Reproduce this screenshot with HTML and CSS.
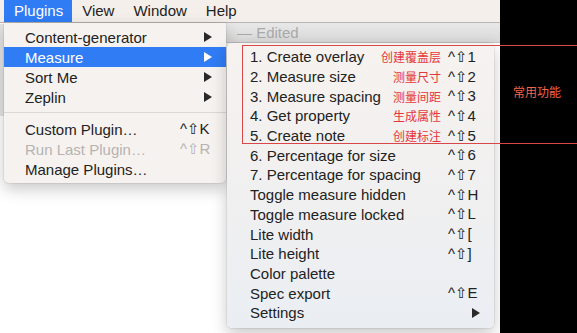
FILE: index.html
```html
<!DOCTYPE html>
<html lang="en">
<head>
  <meta charset="UTF-8" />
  <title>Plugins menu</title>
  <link rel="stylesheet" href="styles.css">
</head>
<body>
  <div class="screen">
    <div class="desk">
      <div class="menubar">
        <span class="top-item active">Plugins</span>
        <span class="top-item">View</span>
        <span class="top-item">Window</span>
        <span class="top-item">Help</span>
      </div>
      <div class="titlebar">— Edited</div>
      <div class="side-strip"></div>

      <div class="menu">
        <div class="row"><span class="name">Content-generator</span><span class="arrow"></span></div>
        <div class="row selected"><span class="name">Measure</span><span class="arrow"></span></div>
        <div class="row"><span class="name">Sort Me</span><span class="arrow"></span></div>
        <div class="row"><span class="name">Zeplin</span><span class="arrow"></span></div>
        <div class="sep"></div>
        <div class="row"><span class="name">Custom Plugin…</span><span class="key">^⇧K</span></div>
        <div class="row disabled"><span class="name">Run Last Plugin…</span><span class="key">^⇧R</span></div>
        <div class="row"><span class="name">Manage Plugins…</span></div>
      </div>

      <div class="submenu">
        <div class="row"><span class="name">1. Create overlay</span><span class="cn">创建覆盖层</span><span class="key">^⇧1</span></div>
        <div class="row"><span class="name">2. Measure size</span><span class="cn">测量尺寸</span><span class="key">^⇧2</span></div>
        <div class="row"><span class="name">3. Measure spacing</span><span class="cn">测量间距</span><span class="key">^⇧3</span></div>
        <div class="row"><span class="name">4. Get property</span><span class="cn">生成属性</span><span class="key">^⇧4</span></div>
        <div class="row"><span class="name">5. Create note</span><span class="cn">创建标注</span><span class="key">^⇧5</span></div>
        <div class="row"><span class="name">6. Percentage for size</span><span class="key">^⇧6</span></div>
        <div class="row"><span class="name">7. Percentage for spacing</span><span class="key">^⇧7</span></div>
        <div class="row"><span class="name">Toggle measure hidden</span><span class="key">^⇧H</span></div>
        <div class="row"><span class="name">Toggle measure locked</span><span class="key">^⇧L</span></div>
        <div class="row"><span class="name">Lite width</span><span class="key">^⇧[</span></div>
        <div class="row"><span class="name">Lite height</span><span class="key">^⇧]</span></div>
        <div class="row"><span class="name">Color palette</span></div>
        <div class="row"><span class="name">Spec export</span><span class="key">^⇧E</span></div>
        <div class="row"><span class="name">Settings</span><span class="arrow"></span></div>
      </div>
    </div>
    <div class="side"></div>

    <div class="note"><span class="note-label">常用功能</span></div>
  </div>
</body>
</html>
```

FILE: styles.css
```css
* {
  margin: 0;
  padding: 0;
  box-sizing: border-box;
}

body {
  font-family: "Liberation Sans", "Noto Sans CJK SC", sans-serif;
  font-size: 15px;
  color: #222;
  background: #fff;
}

.screen {
  position: relative;
  display: flex;
  width: 577px;
  height: 333px;
  overflow: hidden;
}

.desk {
  position: relative;
  width: 500px;
  height: 333px;
  background: #fff;
}

.side {
  flex: 1;
  background: #000;
}

/* top menu bar */
.menubar {
  display: flex;
  height: 23px;
  padding-left: 4px;
  background: #f4efea;
  border-bottom: 1px solid #b9b6b3;
}

.top-item {
  line-height: 22px;
  padding: 0 9px 0 10px;
}

.top-item.active {
  background: #2f7cf5;
  color: #fff;
}

/* window behind the menus */
.titlebar {
  margin-left: 226px;
  height: 20px;
  padding-left: 11px;
  line-height: 19px;
  color: #a9a9a9;
  background: linear-gradient(#e9e8e8, #d9d9d9);
  border-bottom: 1px solid #c4c4c4;
}

.side-strip {
  position: absolute;
  left: 0;
  top: 24px;
  width: 4px;
  height: 92px;
  background: #e4e4e4;
}

/* menus */
.menu,
.submenu {
  position: absolute;
  border-radius: 0 0 5px 5px;
  box-shadow: 0 6px 16px rgba(0, 0, 0, 0.22), 0 0 0 1px rgba(0, 0, 0, 0.06);
}

.menu {
  left: 4px;
  top: 23px;
  width: 222px;
  padding: 4px 0;
  background: #f6f2ef;
}

.submenu {
  left: 227px;
  top: 43px;
  width: 267px;
  padding: 4px 0 5px;
  border-radius: 5px;
  background: linear-gradient(#f6f2ef, #f1f0f0 50%, #eaeef3);
}

.row {
  display: flex;
  align-items: center;
  height: 20px;
  padding: 0 12px 0 21px;
}

.submenu .row {
  height: 19.7px;
  padding: 0 12px 0 23px;
}

.row .name {
  flex: 1;
  white-space: nowrap;
}

.row .key {
  width: 34px;
  white-space: nowrap;
  font-family: "Liberation Sans", "DejaVu Sans", sans-serif;
}

.row .cn {
  margin-right: 7px;
  font-family: "Noto Sans CJK SC", sans-serif;
  font-size: 12px;
  color: #e5373b;
}

.row .arrow {
  width: 0;
  height: 0;
  margin-right: 2px;
  border-top: 5px solid transparent;
  border-bottom: 5px solid transparent;
  border-left: 8px solid #2a2a2a;
}

.row.selected {
  background: #2f7cf5;
  color: #fff;
}

.row.selected .arrow {
  border-left-color: #fff;
}

.row.disabled {
  color: #b6b3b1;
}

.sep {
  height: 1px;
  margin: 5px 0 6px;
  background: #dcd8d5;
}

/* annotation */
.note {
  position: absolute;
  left: 242px;
  top: 45px;
  width: 336px;
  height: 99px;
  display: flex;
  align-items: center;
  justify-content: flex-end;
  padding-right: 16px;
  border: 1px solid #d8484a;
}

.note-label {
  font-family: "Noto Sans CJK SC", sans-serif;
  font-size: 12px;
  color: #f7654a;
  margin-top: -6px;
}
```
